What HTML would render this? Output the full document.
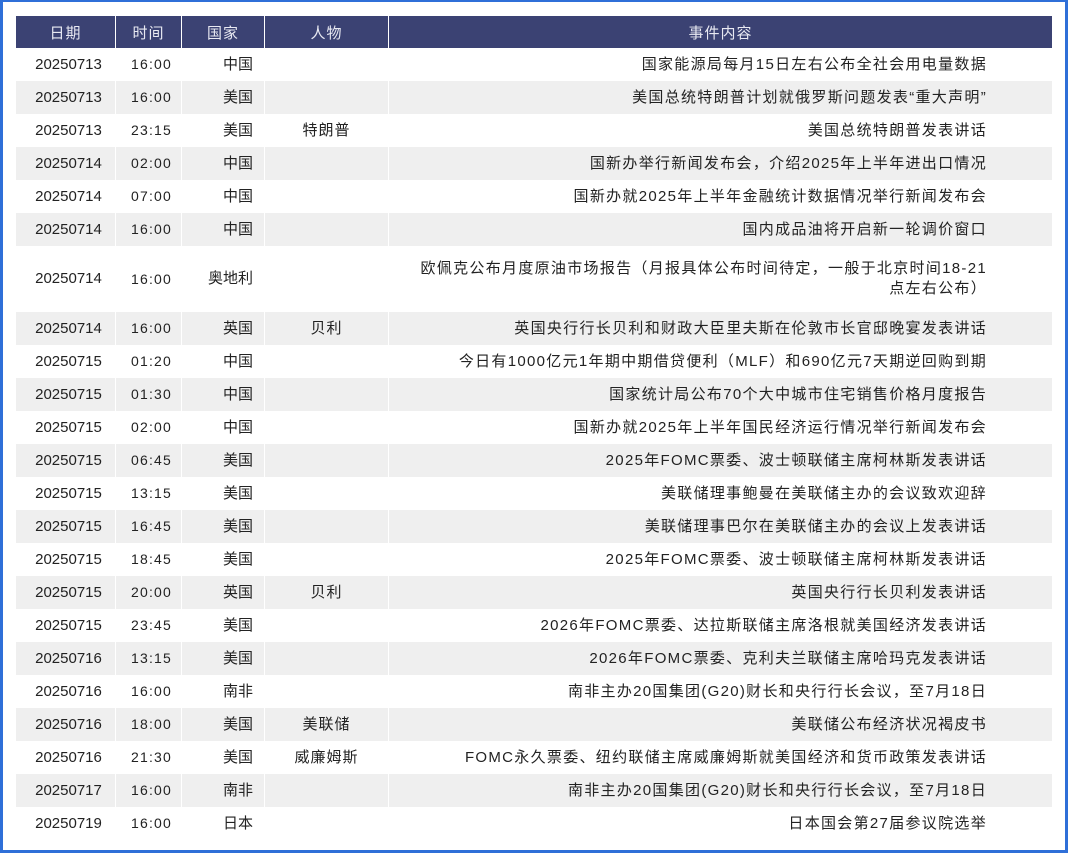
<!DOCTYPE html>
<html><head><meta charset="utf-8"><style>
html,body{margin:0;padding:0;}
body{width:1068px;height:854px;position:relative;background:#fff;font-family:"Liberation Sans","Noto Sans CJK SC",sans-serif;color:#222;overflow:hidden;}
.frame{position:absolute;left:0;top:0;width:1062px;height:848px;border:3px solid #2f6fd8;border-top-width:2px;}
table{position:absolute;left:15px;top:16px;border-collapse:separate;border-spacing:1px 0;width:1038px;table-layout:fixed;font-size:15px;}
th{background:#3b4273;color:#e8e9f2;font-weight:normal;height:32px;font-size:15px;padding:0;letter-spacing:1px;}
td{height:33px;line-height:33px;padding:0;white-space:nowrap;vertical-align:middle;}
tr.g td{background:#efefef;}
td.c{text-align:center;padding-left:6px;}
td.t{text-align:center;letter-spacing:1.2px;padding-left:6px;font-size:14px;}
td.r{text-align:right;padding-right:11px;}
td.p{text-align:center;letter-spacing:1px;}
td.e{text-align:right;padding-right:65px;letter-spacing:1.3px;}
tr.tall td{height:66px;line-height:66px;}
tr.tall td.e{line-height:20px;}
</style></head><body>
<div class="frame"></div>
<table>
<colgroup><col style="width:99px"><col style="width:65px"><col style="width:82px"><col style="width:123px"><col style="width:663px"></colgroup>
<tr><th>日期</th><th>时间</th><th>国家</th><th>人物</th><th>事件内容</th></tr>
<tr><td class="c">20250713</td><td class="t">16:00</td><td class="r">中国</td><td class="p"></td><td class="e">国家能源局每月15日左右公布全社会用电量数据</td></tr>
<tr class="g"><td class="c">20250713</td><td class="t">16:00</td><td class="r">美国</td><td class="p"></td><td class="e">美国总统特朗普计划就俄罗斯问题发表“重大声明”</td></tr>
<tr><td class="c">20250713</td><td class="t">23:15</td><td class="r">美国</td><td class="p">特朗普</td><td class="e">美国总统特朗普发表讲话</td></tr>
<tr class="g"><td class="c">20250714</td><td class="t">02:00</td><td class="r">中国</td><td class="p"></td><td class="e">国新办举行新闻发布会，介绍2025年上半年进出口情况</td></tr>
<tr><td class="c">20250714</td><td class="t">07:00</td><td class="r">中国</td><td class="p"></td><td class="e">国新办就2025年上半年金融统计数据情况举行新闻发布会</td></tr>
<tr class="g"><td class="c">20250714</td><td class="t">16:00</td><td class="r">中国</td><td class="p"></td><td class="e">国内成品油将开启新一轮调价窗口</td></tr>
<tr class="tall"><td class="c">20250714</td><td class="t">16:00</td><td class="r">奥地利</td><td class="p"></td><td class="e">欧佩克公布月度原油市场报告（月报具体公布时间待定，一般于北京时间18-21<br>点左右公布）</td></tr>
<tr class="g"><td class="c">20250714</td><td class="t">16:00</td><td class="r">英国</td><td class="p">贝利</td><td class="e">英国央行行长贝利和财政大臣里夫斯在伦敦市长官邸晚宴发表讲话</td></tr>
<tr><td class="c">20250715</td><td class="t">01:20</td><td class="r">中国</td><td class="p"></td><td class="e">今日有1000亿元1年期中期借贷便利（MLF）和690亿元7天期逆回购到期</td></tr>
<tr class="g"><td class="c">20250715</td><td class="t">01:30</td><td class="r">中国</td><td class="p"></td><td class="e">国家统计局公布70个大中城市住宅销售价格月度报告</td></tr>
<tr><td class="c">20250715</td><td class="t">02:00</td><td class="r">中国</td><td class="p"></td><td class="e">国新办就2025年上半年国民经济运行情况举行新闻发布会</td></tr>
<tr class="g"><td class="c">20250715</td><td class="t">06:45</td><td class="r">美国</td><td class="p"></td><td class="e">2025年FOMC票委、波士顿联储主席柯林斯发表讲话</td></tr>
<tr><td class="c">20250715</td><td class="t">13:15</td><td class="r">美国</td><td class="p"></td><td class="e">美联储理事鲍曼在美联储主办的会议致欢迎辞</td></tr>
<tr class="g"><td class="c">20250715</td><td class="t">16:45</td><td class="r">美国</td><td class="p"></td><td class="e">美联储理事巴尔在美联储主办的会议上发表讲话</td></tr>
<tr><td class="c">20250715</td><td class="t">18:45</td><td class="r">美国</td><td class="p"></td><td class="e">2025年FOMC票委、波士顿联储主席柯林斯发表讲话</td></tr>
<tr class="g"><td class="c">20250715</td><td class="t">20:00</td><td class="r">英国</td><td class="p">贝利</td><td class="e">英国央行行长贝利发表讲话</td></tr>
<tr><td class="c">20250715</td><td class="t">23:45</td><td class="r">美国</td><td class="p"></td><td class="e">2026年FOMC票委、达拉斯联储主席洛根就美国经济发表讲话</td></tr>
<tr class="g"><td class="c">20250716</td><td class="t">13:15</td><td class="r">美国</td><td class="p"></td><td class="e">2026年FOMC票委、克利夫兰联储主席哈玛克发表讲话</td></tr>
<tr><td class="c">20250716</td><td class="t">16:00</td><td class="r">南非</td><td class="p"></td><td class="e">南非主办20国集团(G20)财长和央行行长会议，至7月18日</td></tr>
<tr class="g"><td class="c">20250716</td><td class="t">18:00</td><td class="r">美国</td><td class="p">美联储</td><td class="e">美联储公布经济状况褐皮书</td></tr>
<tr><td class="c">20250716</td><td class="t">21:30</td><td class="r">美国</td><td class="p">威廉姆斯</td><td class="e">FOMC永久票委、纽约联储主席威廉姆斯就美国经济和货币政策发表讲话</td></tr>
<tr class="g"><td class="c">20250717</td><td class="t">16:00</td><td class="r">南非</td><td class="p"></td><td class="e">南非主办20国集团(G20)财长和央行行长会议，至7月18日</td></tr>
<tr><td class="c">20250719</td><td class="t">16:00</td><td class="r">日本</td><td class="p"></td><td class="e">日本国会第27届参议院选举</td></tr>
</table>
</body></html>
